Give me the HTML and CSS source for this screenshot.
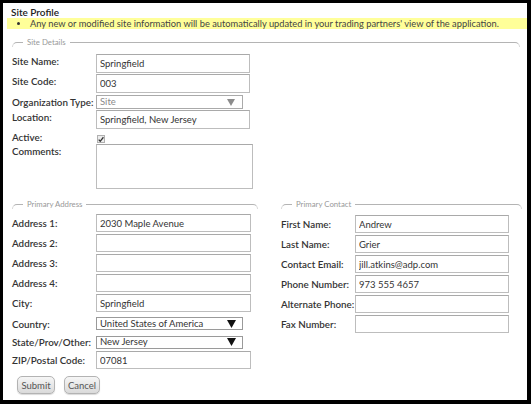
FILE: index.html
```html
<!DOCTYPE html>
<html lang="en">
<head>
<meta charset="utf-8">
<title>Site Profile</title>
<link rel="stylesheet" href="styles.css">
</head>
<body>
<div class="frame">
  <h1 class="title">Site Profile</h1>
  <ul class="notice">
    <li>Any new or modified site information will be automatically updated in your trading partners' view of the application.</li>
  </ul>

  <section class="group details">
    <div class="group-head"><span class="legend">Site Details</span></div>
    <div class="row r-name"><label class="lbl">Site Name:</label><input class="txt w154" type="text" value="Springfield"></div>
    <div class="row r-code"><label class="lbl">Site Code:</label><input class="txt w154" type="text" value="003"></div>
    <div class="row r-org"><label class="lbl">Organization Type:</label>
      <div class="sel disabled w147"><span>Site</span><svg class="arrow" width="8" height="7" viewBox="0 0 8 7"><path d="M0 0H8L4 7Z"/></svg></div>
    </div>
    <div class="row r-loc"><label class="lbl">Location:</label><input class="txt w154" type="text" value="Springfield, New Jersey"></div>
    <div class="row r-act"><label class="lbl">Active:</label>
      <span class="check"><svg width="7" height="7" viewBox="0 0 7 7"><path d="M0.8 3.6L2.6 5.6L6.3 0.9" fill="none" stroke="#333" stroke-width="1.5"/></svg></span>
    </div>
    <div class="row r-com"><label class="lbl">Comments:</label><textarea class="area"></textarea></div>
  </section>

  <div class="cols">
    <section class="group address">
      <div class="group-head"><span class="legend">Primary Address</span></div>
      <div class="crow h20"><label class="lbl">Address 1:</label><input class="txt w155" type="text" value="2030 Maple Avenue"></div>
      <div class="crow h20"><label class="lbl">Address 2:</label><input class="txt w155" type="text"></div>
      <div class="crow h20"><label class="lbl">Address 3:</label><input class="txt w155" type="text"></div>
      <div class="crow h20"><label class="lbl">Address 4:</label><input class="txt w155" type="text"></div>
      <div class="crow h20"><label class="lbl">City:</label><input class="txt w155" type="text" value="Springfield"></div>
      <div class="crow h21"><label class="lbl">Country:</label>
        <div class="sel w147"><span>United States of America</span><svg class="arrow" width="9" height="8" viewBox="0 0 9 8"><path d="M0 0H9L4.5 8Z"/></svg></div>
      </div>
      <div class="crow h16"><label class="lbl">State/Prov/Other:</label>
        <div class="sel w147"><span>New Jersey</span><svg class="arrow" width="9" height="8" viewBox="0 0 9 8"><path d="M0 0H9L4.5 8Z"/></svg></div>
      </div>
      <div class="crow h20"><label class="lbl">ZIP/Postal Code:</label><input class="txt w155" type="text" value="07081"></div>
    </section>

    <section class="group contact">
      <div class="group-head"><span class="legend">Primary Contact</span></div>
      <div class="crow h20"><label class="lbl">First Name:</label><input class="txt w154" type="text" value="Andrew"></div>
      <div class="crow h20"><label class="lbl">Last Name:</label><input class="txt w154" type="text" value="Grier"></div>
      <div class="crow h20"><label class="lbl">Contact Email:</label><input class="txt w154" type="text" value="jill.atkins@adp.com"></div>
      <div class="crow h20"><label class="lbl">Phone Number:</label><input class="txt w154" type="text" value="973 555 4657"></div>
      <div class="crow h20"><label class="lbl">Alternate Phone:</label><input class="txt w154" type="text"></div>
      <div class="crow h20"><label class="lbl">Fax Number:</label><input class="txt w154" type="text"></div>
    </section>
  </div>

  <div class="actions">
    <button class="btn b-submit" type="button">Submit</button>
    <button class="btn b-cancel" type="button">Cancel</button>
  </div>
</div>
</body>
</html>
```

FILE: styles.css
```css
* { box-sizing: border-box; }

html, body {
  margin: 0;
  padding: 0;
  background: #000;
}

body {
  font-family: Lato, "Open Sans", sans-serif;
  color: #333;
  font-size: 9.5px;
}

.frame {
  margin: 3px 0 0 3px;
  width: 524px;
  height: 397px;
  background: #fff;
  overflow: hidden;
}

.title {
  margin: 0;
  padding: 2px 0 0 8px;
  font-size: 10px;
  line-height: 14px;
  font-weight: 600;
  color: #222;
}

.notice {
  list-style: none;
  margin: -1px 0 0 4px;
  padding: 0;
  height: 11px;
  background: #ffff99;
}

.notice li {
  position: relative;
  padding-left: 23px;
  font-size: 9.3px;
  line-height: 11px;
  color: #444;
  white-space: nowrap;
}

.notice li::before {
  content: "";
  position: absolute;
  left: 10px;
  top: 4px;
  width: 3px;
  height: 3px;
  border-radius: 50%;
  background: #333;
}

/* groups */
.group {
  display: flex;
  flex-direction: column;
}

.group-head {
  display: flex;
  height: 9px;
  margin-bottom: 0;
}

.group-head::before {
  content: "";
  width: 10px;
  height: 4px;
  margin-top: 4px;
  border-top: 1px solid #b4b4b4;
  border-left: 1px solid #d8d8d8;
  border-top-left-radius: 5px;
}

.group-head::after {
  content: "";
  flex: 1;
  height: 4px;
  margin-top: 4px;
  border-top: 1px solid #b4b4b4;
  border-right: 1px solid #d8d8d8;
  border-top-right-radius: 5px;
}

.legend {
  font-size: 7.8px;
  line-height: 9px;
  color: #999;
  padding: 0 4px 0 4px;
}

.details {
  margin: 9px 0 0 9px;
  width: 508px;
}

.details .group-head { margin-bottom: 7px; }

.row {
  display: flex;
  align-items: flex-start;
}

.row .lbl {
  width: 84px;
  line-height: 14px;
}

.r-name { height: 20px; }
.r-code { height: 21px; }
.r-org  { height: 15px; }
.r-loc  { height: 20px; }
.r-act  { height: 14px; }
.r-com  { height: 46px; }

.lbl {
  flex: none;
  font-weight: 600;
  color: #333;
  font-size: 9.8px;
  white-space: nowrap;
}

.txt {
  height: 19px;
  border: 1px solid #bdbdbd;
  border-top-color: #a9a9a9;
  padding: 0 3px;
  font-family: inherit;
  font-size: 9.5px;
  color: #333;
  background: #fff;
  outline: none;
}

.w154 { width: 154px; }
.w155 { width: 155px; }
.w147 { width: 147px; }

.sel {
  height: 14px;
  border: 1px solid #9a9a9a;
  display: flex;
  align-items: center;
  justify-content: space-between;
  padding: 0 6px 0 3px;
  font-size: 9.5px;
  line-height: 12px;
  color: #333;
  background: #fff;
}

.sel .arrow { fill: #111; flex: none; }
.sel.disabled { color: #8a8a8a; border-color: #aaa; padding-right: 7px; }
.sel.disabled .arrow { fill: #8c8c8c; }

.check {
  margin: 5px 0 0 1px;
  width: 8px;
  height: 8px;
  border: 1px solid #b0b0b0;
  background: #ececec;
  display: flex;
  align-items: center;
  justify-content: center;
}

.area {
  width: 157px;
  height: 45px;
  border: 1px solid #bdbdbd;
  border-top-color: #a9a9a9;
  resize: none;
  outline: none;
  font-family: inherit;
}

/* columns */
.cols {
  display: flex;
  margin-top: 10px;
  align-items: flex-start;
}

.address {
  margin-left: 9px;
  width: 246px;
}

.contact {
  margin-left: 23px;
  width: 241px;
}

.address .group-head { margin-bottom: 4px; }
.contact .group-head { margin-bottom: 5px; }

.crow {
  display: flex;
  align-items: center;
}

.address .lbl { width: 84px; }
.contact .lbl { width: 74px; }

.crow .txt { height: 18px; }
.crow .sel { height: 13px; }

.h20 { height: 20px; }
.h21 { height: 21px; }
.h16 { height: 16px; }

/* buttons */
.actions {
  display: flex;
  gap: 9px;
  margin: 6px 0 0 14px;
}

.btn {
  height: 18px;
  padding: 0;
  border: 1px solid #b3b3b3;
  border-radius: 5px;
  background: linear-gradient(#f6f6f6, #dadada);
  box-shadow: 0 1px 1px rgba(0,0,0,0.15);
  font-family: inherit;
  font-size: 9.5px;
  line-height: 15px;
  color: #555;
}

.b-submit { width: 38px; }
.b-cancel { width: 36px; }
```
